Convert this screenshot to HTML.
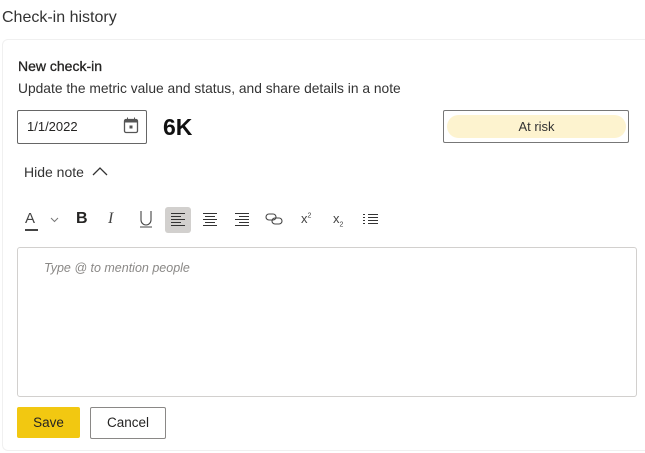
<!DOCTYPE html>
<html><head><style>
body{margin:0;width:645px;height:453px;background:#fff;font-family:"Liberation Sans",sans-serif;color:#252423;position:relative;overflow:hidden}
.a{position:absolute}
</style></head><body>
<div class="a" style="left:2px;top:9px;font-size:16px;color:#333">Check-in history</div>
<div class="a" style="left:2px;top:39px;width:660px;height:410px;border:1px solid #f0f0f0;border-radius:6px"></div>
<div class="a" style="left:18px;top:58px;font-size:14px;color:#252423;-webkit-text-stroke:0.3px #252423">New check-in</div>
<div class="a" style="left:18px;top:81px;font-size:13.8px;color:#333">Update the metric value and status, and share details in a note</div>
<div class="a" style="left:17px;top:110px;width:128px;height:32px;border:1px solid #666;border-radius:2px"></div>
<div class="a" style="left:27px;top:119px;font-size:13px">1/1/2022</div>
<svg class="a" style="left:123px;top:117px" width="16" height="17" viewBox="0 0 16 17"><rect x="1.5" y="2.5" width="13" height="13" rx="1.5" fill="none" stroke="#555" stroke-width="1.3"/><rect x="1.5" y="2.5" width="13" height="3" fill="#555"/><rect x="6.5" y="8.5" width="3" height="3" fill="#555"/><line x1="4.5" y1="0.5" x2="4.5" y2="3" stroke="#555"/><line x1="11.5" y1="0.5" x2="11.5" y2="3" stroke="#555"/></svg>
<div class="a" style="left:163px;top:114px;font-size:23px;font-weight:bold;color:#111">6K</div>
<div class="a" style="left:443px;top:110px;width:184px;height:31px;border:1px solid #777;border-radius:2px"></div>
<div class="a" style="left:447px;top:115px;width:179px;height:23px;background:#fdf3cf;border-radius:12px;font-size:13px;text-align:center;line-height:23px;color:#333">At risk</div>
<div class="a" style="left:24px;top:164px;font-size:14px;color:#333">Hide note</div>
<svg class="a" style="left:92px;top:166px" width="16" height="10"><path d="M1 9 L8 2 L15 9" fill="none" stroke="#333" stroke-width="1.3"/></svg>
<div class="a" style="left:165px;top:207px;width:26px;height:26px;background:#d2d0ce;border-radius:3px"></div>
<div class="a" style="left:25px;top:210px;font-size:15px;color:#444">A</div>
<div class="a" style="left:25px;top:229px;width:13px;height:2px;background:#444"></div>
<svg class="a" style="left:50px;top:217px" width="9" height="6"><path d="M1 1 L4.5 4.5 L8 1" fill="none" stroke="#777"/></svg>
<div class="a" style="left:76px;top:210px;font-size:16px;font-weight:bold;color:#252423">B</div>
<div class="a" style="left:108px;top:210px;font-size:16px;font-style:italic;font-family:'Liberation Serif',serif;color:#444">I</div>
<svg class="a" style="left:139px;top:210px" width="14" height="18"><path d="M2 1 V10 A5 5 0 0 0 12 10 V1" fill="none" stroke="#444" stroke-width="1.1"/><line x1="1" y1="17" x2="13" y2="17" stroke="#444"/></svg>
<svg class="a" style="left:170px;top:212px" width="16" height="14" stroke="#333" stroke-width="1.1"><path d="M1 1.5H15M1 4.5H11M1 7.5H15M1 10.5H11M1 13.5H15"/></svg>
<svg class="a" style="left:202px;top:212px" width="16" height="14" stroke="#333" stroke-width="1.1"><path d="M1 1.5H15M3 4.5H13M1 7.5H15M3 10.5H13M1 13.5H15"/></svg>
<svg class="a" style="left:234px;top:212px" width="16" height="14" stroke="#333" stroke-width="1.1"><path d="M1 1.5H15M5 4.5H15M1 7.5H15M5 10.5H15M1 13.5H15"/></svg>
<svg class="a" style="left:265px;top:213px" width="18" height="12" fill="none" stroke="#444" stroke-width="1.1"><rect x="1" y="1" width="10" height="6" rx="3"/><rect x="7" y="5" width="10" height="6" rx="3"/></svg>
<div class="a" style="left:301px;top:211px;font-size:13px;color:#444">x<sup style="font-size:7px">2</sup></div>
<div class="a" style="left:333px;top:211px;font-size:13px;color:#444">x<sub style="font-size:7px">2</sub></div>
<svg class="a" style="left:362px;top:213px" width="17" height="13" stroke="#333" stroke-width="1.1"><path d="M1 1.5H3M6 1.5H16M1 4.5H3M6 4.5H16M1 7.5H3M6 7.5H16M1 10.5H3M6 10.5H16"/></svg>
<div class="a" style="left:17px;top:247px;width:618px;height:148px;border:1px solid #d2d0ce;border-radius:3px"></div>
<div class="a" style="left:44px;top:261px;font-size:12.5px;font-style:italic;color:#8a8886">Type @ to mention people</div>
<div class="a" style="left:17px;top:407px;width:63px;height:31px;background:#f2c811;border-radius:2px;font-size:13.5px;text-align:center;line-height:31px;color:#252423">Save</div>
<div class="a" style="left:90px;top:407px;width:74px;height:30px;border:1px solid #8a8886;border-radius:2px;font-size:13.5px;text-align:center;line-height:30px;color:#252423">Cancel</div>
</body></html>
